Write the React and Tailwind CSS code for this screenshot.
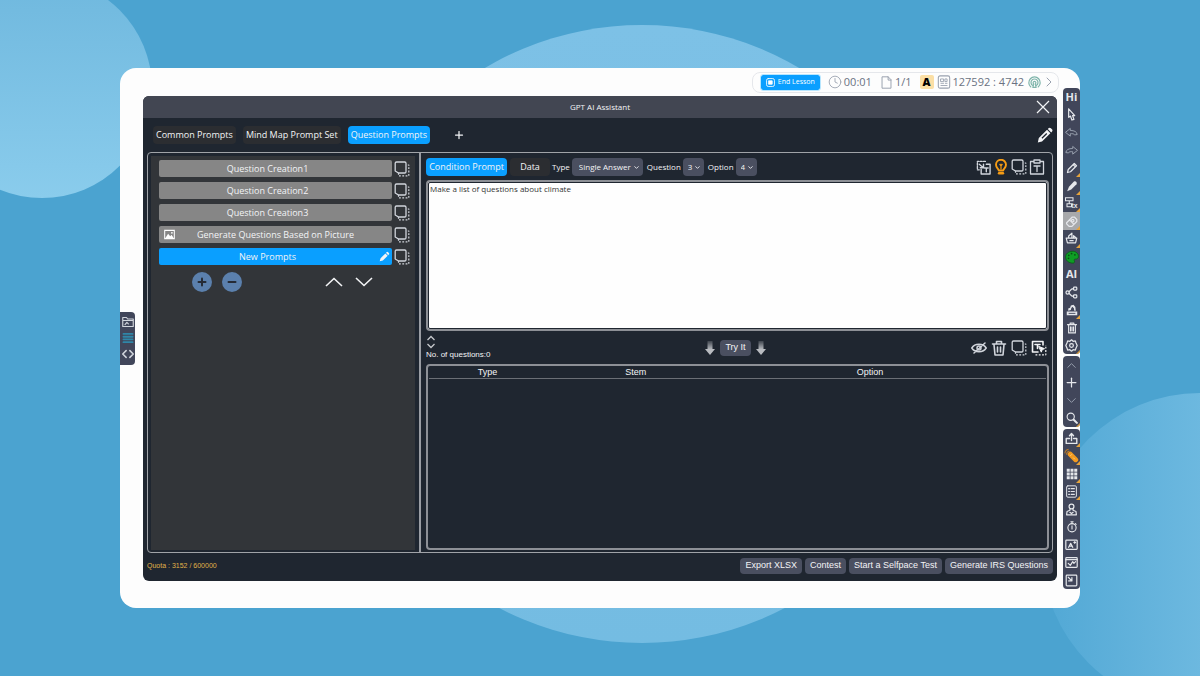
import { useState } from 'react';
import clsx from 'clsx';
import { ChevronDown, ChevronRight, ChevronUp, Clock, Plus, Minus } from 'lucide-react';

// Small stroke icon on a 16x16 grid
const Glyph = ({ children, className = 'size-3' }) => (
  <svg
    viewBox="0 0 16 16"
    className={className}
    fill="none"
    stroke="currentColor"
    strokeWidth="1.5"
    strokeLinecap="round"
    strokeLinejoin="round"
    aria-hidden="true"
  >
    {children}
  </svg>
);

const CopyIcon = ({ className = 'size-4' }) => (
  <Glyph className={className}>
    <path d="M2.500 1h8.200a1.300 1.300 0 0 1 1.300 1.300v8.400a1.300 1.300 0 0 1-1.300 1.300H4.500L1.200 10V2.300A1.300 1.300 0 0 1 2.500 1z" strokeWidth="1.300" />
    <path d="M4.500 12v2.800h10.300V4H12.500" strokeDasharray="1.800 1.500" strokeWidth="1.200" strokeLinecap="butt" />
  </Glyph>
);

const PencilIcon = ({ className }) => (
  <svg viewBox="0 0 16 16" className={className} fill="currentColor" aria-hidden="true">
    <path d="M11 1.800a1.600 1.600 0 0 1 2.300 0l1 1a1.600 1.600 0 0 1 0 2.300l-.9.9-3.300-3.300zM9.300 3.500l3.300 3.300-7 7L1 15l1.300-4.500z" />
  </svg>
);

const BigPencilIcon = ({ className }) => (
  <svg viewBox="0 0 16 16" className={className} fill="currentColor" aria-hidden="true">
    <path d="M11.500 1.300a1.700 1.700 0 0 1 2.400 0l1 1a1.700 1.700 0 0 1 0 2.400l-.7.7-3.400-3.400zM10 2.800l3.400 3.400-8.400 8.300L.8 15.500l1-4.400z" />
    <path d="M4.500 10.800l4.800-4.800 .9.9-4.800 4.800z" fill="#1f2630" />
  </svg>
);

const PointerIcon = () => (
  <Glyph className="size-[13px]">
    <path d="M4.500 1v10.500l2.300-1.500 1.700 4.800 2.500-.8-1.700-4.700h2.700z" />
  </Glyph>
);

const UndoIcon = () => (
  <Glyph className="size-[13px] text-gray-400">
    <path d="M1 7.500L6.500 3v2.500c5 0 8 1.500 8.500 5l-3 .5c-1-1.500-3-1.700-5.500-1.500V12z" strokeWidth="1.200" />
  </Glyph>
);

const RedoIcon = () => (
  <Glyph className="size-[13px] text-gray-400">
    <path d="M15 7.500L9.500 3v2.500c-5 0-8 1.500-8.500 5l3 .5c1-1.500 3-1.700 5.500-1.500V12z" strokeWidth="1.200" />
  </Glyph>
);

const PenIcon = () => (
  <Glyph>
    <path d="M2 14l1-4 8-8 3 3-8 8zM9.500 3.500l3 3" strokeWidth="1.700" />
  </Glyph>
);

const MarkerIcon = () => (
  <svg viewBox="0 0 16 16" className="size-3" fill="currentColor" aria-hidden="true">
    <path d="M10.500 2c2.300-1.500 5 1.200 3.500 3.500L7 12.500l-5.500 2.500L4 9z" />
  </svg>
);

const TextToolIcon = () => (
  <svg viewBox="0 0 18 16" className="h-3 w-[15px]" fill="none" stroke="currentColor" aria-hidden="true">
    <path d="M1 1h10v4H1zM6 5v4M3 9h6v4H3z" strokeWidth="1.400" />
    <text x="9" y="15" fontSize="9" fontWeight="700" fill="currentColor" stroke="none" fontFamily="Liberation Sans">tx</text>
  </svg>
);

const EraserIcon = () => (
  <Glyph className="size-[13px] text-gray-200">
    <path d="M2 9.500L9 2.500h2.500l3 3V8L8.500 14H5l-3-3zM5.500 6l5.500 5.500" />
    <circle cx="9.500" cy="7" r="1.500" />
  </Glyph>
);

const ShapesIcon = () => (
  <Glyph className="size-[13px]">
    <path d="M1.500 7.500h13l-1.500 6H3zM4.500 7V5l4-3.500V7M10.500 7V4.500l3 2.500" />
    <path d="M6 10.700h4" />
  </Glyph>
);

const PaletteIcon = () => (
  <svg viewBox="0 0 16 16" className="size-[14px]" aria-hidden="true">
    <path
      d="M8 1.500c4.500-.3 7.500 2.500 7.300 6 0 2.300-1.500 3-3.300 2.800-1.500 0-1.800 1-1.300 2 .6 1.500 0 2.700-1.700 2.700C4 15 .7 11.800.7 8S4 1.800 8 1.500z"
      fill="#0f9d25"
      stroke="#0b5f1a"
    />
    <g fill="#0a4f16">
      <circle cx="4" cy="9.500" r="1" />
      <circle cx="4.300" cy="6" r="1" />
      <circle cx="7.500" cy="4" r="1" />
      <circle cx="11.300" cy="5.500" r="1" />
    </g>
  </svg>
);

const NodesIcon = () => (
  <Glyph className="size-[13px]">
    <circle cx="3.200" cy="8" r="2" />
    <rect x="10.500" y="1.500" width="4" height="3.500" rx="1" />
    <rect x="10.500" y="11" width="4" height="3.500" rx="1" />
    <path d="M5 7c1.500-.5 1.500-3.700 5.500-3.700M5 9c1.500.5 1.500 3.700 5.500 3.700" />
  </Glyph>
);

const StampIcon = () => (
  <svg viewBox="0 0 16 16" className="size-3" fill="currentColor" aria-hidden="true">
    <path d="M1 10h14v5H1zM3 9V6l2.500-1 1-3L10 1l2.500 3L13 9h-2l-.5-3.500-2-2L7 5.500 6.500 8z" />
    <path d="M3.500 12.500h9" stroke="#41465a" strokeWidth="1.200" />
  </svg>
);

const BinIcon = () => (
  <Glyph>
    <path d="M2 3.500h12M5.500 3V1.500h5V3M3.500 4v10.500h9V4M6 6.500v5.500M8 6.500v5.500M10 6.500v5.500" />
  </Glyph>
);

const GearIcon = () => (
  <Glyph className="size-[13px]">
    <path d="M8 1l2 1.800 2.700-.4.900 2.600L15 8l-1.400 3-.9 2.600-2.700-.4L8 15l-2-1.800-2.700.4-.9-2.600L1 8l1.400-3 .9-2.600 2.700.4z" />
    <circle cx="8" cy="8" r="2.300" />
  </Glyph>
);

const ZoomIcon = () => (
  <Glyph>
    <circle cx="6.300" cy="6.300" r="4.800" />
    <path d="M10.300 10.300l4.200 4.200" strokeWidth="2.800" />
  </Glyph>
);

const UploadIcon = () => (
  <Glyph className="size-[13px]">
    <path d="M5.500 8h-4v6h13V8h-4M8 10.500V2M5.500 4.500L8 1.800l2.500 2.700" strokeWidth="1.700" />
  </Glyph>
);

const RemoteIcon = () => (
  <svg viewBox="0 0 18 18" className="size-[15px]" fill="none" aria-hidden="true">
    <path d="M7.500 7.500l6.500 6.500" stroke="#f39a1f" strokeWidth="6" strokeLinecap="round" />
    <path d="M7.500 9.500l2-2M11 11.500l2 2" stroke="#fbd18c" />
    <path d="M1 6.500C1.300 4 3 2 5.500 1.500M3 8c.2-2 1.500-3.700 3.500-4.300" stroke="#b97a2a" strokeWidth="1.300" />
  </svg>
);

const GridIcon = () => (
  <svg viewBox="0 0 16 16" className="size-3" fill="currentColor" aria-hidden="true">
    <path d="M1 1h4v4H1zM6 1h4v4H6zM11 1h4v4h-4zM1 6h4v4H1zM6 6h4v4H6zM11 6h4v4h-4zM1 11h4v4H1zM6 11h4v4H6zM11 11h4v4h-4z" />
  </svg>
);

const ListIcon = () => (
  <Glyph className="size-[13px]">
    <rect x="2" y="1" width="12" height="14" rx="1.500" strokeWidth="1.200" />
    <path d="M4.500 4.500h1M7.500 4.500h4M4.500 8h1M7.500 8h4M4.500 11.500h1M7.500 11.500h4" />
  </Glyph>
);

const PersonIcon = () => (
  <Glyph className="size-[13px]">
    <circle cx="8" cy="4.300" r="3" />
    <path d="M6.300 7L6 9l-3.500 1.500L2 14.500h12l-.5-4L10 9l-.3-2M6 11.500l2 1.500 2-1.500" />
  </Glyph>
);

const TimerIcon = () => (
  <Glyph>
    <circle cx="8" cy="9" r="5.500" />
    <path d="M6.500 1h3M8 1.500v2M8 6.500v4M12.500 3.500l1 1" />
  </Glyph>
);

const PictureTextIcon = () => (
  <Glyph className="size-[13px]">
    <rect x="1" y="2.500" width="14" height="11.500" rx="1" />
    <path d="M4.500 11.500l2.500-5 2.500 5M5.500 10h3M11 5.500h2M12 4.500v2" />
  </Glyph>
);

const ChartIcon = () => (
  <Glyph className="size-[13px]">
    <rect x="1" y="2" width="14" height="12" rx="1" />
    <path d="M1 4.500h14M4 9l2.500 2.500L9.500 7l1.500 2 2-2" />
  </Glyph>
);

const CornerIcon = () => (
  <Glyph className="size-[13px]">
    <rect x="1.500" y="1.500" width="13" height="13" rx="1" />
    <path d="M4 4l4.500 4.500M8.500 4.500v4h-4" />
  </Glyph>
);

const toolGroups = [
  {
    size: 'flex-[15]',
    tools: [
      { name: 'Hi', text: 'Hi' },
      { name: 'Select', icon: PointerIcon },
      { name: 'Undo', icon: UndoIcon },
      { name: 'Redo', icon: RedoIcon },
      { name: 'Pen', icon: PenIcon, more: true },
      { name: 'Marker', icon: MarkerIcon, more: true },
      { name: 'Text', icon: TextToolIcon, more: true },
      { name: 'Eraser', icon: EraserIcon, more: true, active: true },
      { name: 'Shapes', icon: ShapesIcon, more: true },
      { name: 'Palette', icon: PaletteIcon },
      { name: 'AI', text: 'AI' },
      { name: 'Mind map', icon: NodesIcon },
      { name: 'Stamp', icon: StampIcon, more: true },
      { name: 'Clear', icon: BinIcon },
      { name: 'Settings', icon: GearIcon, more: true },
    ],
  },
  {
    size: 'flex-[4]',
    tools: [
      { name: 'Previous page', icon: () => <ChevronUp className="size-[15px] text-gray-400" strokeWidth={1.5} /> },
      { name: 'Add page', icon: () => <Plus className="size-[15px]" strokeWidth={2} /> },
      { name: 'Next page', icon: () => <ChevronDown className="size-[15px] text-gray-400" strokeWidth={1.5} /> },
      { name: 'Zoom', icon: ZoomIcon, more: true },
    ],
  },
  {
    size: 'flex-[9]',
    tools: [
      { name: 'Share', icon: UploadIcon, more: true },
      { name: 'Remote', icon: RemoteIcon, more: true },
      { name: 'Apps', icon: GridIcon, more: true },
      { name: 'Questions', icon: ListIcon, more: true },
      { name: 'Pick a student', icon: PersonIcon },
      { name: 'Timer', icon: TimerIcon },
      { name: 'Picture text', icon: PictureTextIcon },
      { name: 'Chart', icon: ChartIcon },
      { name: 'Dock', icon: CornerIcon },
    ],
  },
];

const prompts = [
  { name: 'Question Creation1' },
  { name: 'Question Creation2' },
  { name: 'Question Creation3' },
  { name: 'Generate Questions Based on Picture', picture: true },
  { name: 'New Prompts', editable: true },
];

const tabs = ['Common Prompts', 'Mind Map Prompt Set', 'Question Prompts'];
const exportActions = ['Export XLSX', 'Contest', 'Start a Selfpace Test', 'Generate IRS Questions'];

const Tab = ({ label, active, onClick, className }) => (
  <button
    onClick={onClick}
    className={clsx('h-[18px] rounded', active ? 'bg-[#0a9fff]' : 'bg-[#2b2d31]', className)}
  >
    {label}
  </button>
);

const SelectField = ({ id, label, options, className }) => (
  <div className="flex items-center gap-[2px]">
    <label htmlFor={id}>{label}</label>
    <div className="relative">
      <select id={id} className={clsx('h-[18px] appearance-none rounded-sm bg-[#4a4f60] text-[8px]', className)}>
        {options.map((option) => (
          <option key={option}>{option}</option>
        ))}
      </select>
      <ChevronDown className="pointer-events-none absolute right-[3px] top-[6px] size-[7px]" strokeWidth={3} />
    </div>
  </div>
);

const IconButton = ({ label, children, className }) => (
  <button aria-label={label} className={clsx('flex items-center justify-center', className)}>
    {children}
  </button>
);

const StatusBar = () => (
  <div className="-mr-[2px] flex h-[21px] items-center rounded-lg border border-gray-200 pl-2 pr-px text-[11px] text-gray-500">
    <button className="mr-2 flex h-[15px] items-center gap-[3px] rounded-xs bg-[#0a9fff] px-[5px] text-[7px] text-white outline outline-sky-200">
      <Glyph className="size-[9px]">
        <rect x="1" y="1" width="14" height="14" rx="3" />
        <rect x="5" y="5" width="6" height="6" fill="currentColor" />
      </Glyph>
      End Lesson
    </button>
    <Clock className="mr-[2px] size-[14px] text-gray-400" strokeWidth={1.5} />
    <span className="mr-2">00:01</span>
    <Glyph className="mr-[2px] size-[13px] text-gray-400">
      <path d="M3 1h7l3.500 3.500V15H3zM10 1v4h3.500" strokeWidth="1.200" />
    </Glyph>
    <span className="mr-2">1/1</span>
    <span className="mr-[3px] flex size-[14px] items-center justify-center rounded-xs bg-[#fbdfa5] text-[11px] font-extrabold text-black">
      A
    </span>
    <Glyph className="mr-[2px] size-[14px] text-gray-400">
      <rect x="1.500" y="1" width="13" height="14" rx="2" strokeWidth="1.200" />
      <path d="M4.500 4.500h3v3h-3zM9.500 4.500h2v3h-2zM4.500 9.500h3M9.500 9.500h2M4.500 12h7" strokeWidth="1" />
    </Glyph>
    <span className="mr-1">127592 : 4742</span>
    <Glyph className="size-[13px] text-[#7fb5ab]">
      <path d="M3.500 13.500a7 7 0 1 1 9 0M5.500 11.500a4.300 4.300 0 1 1 5 0M7 9.800a1.700 1.700 0 1 1 2 0L10 14H6z" />
    </Glyph>
    <ChevronRight className="size-4 text-gray-400" strokeWidth={1.5} />
  </div>
);

const SideTabs = () => (
  <div className="flex h-[53px] w-[15px] flex-col items-center justify-center gap-1 self-center rounded-r-sm bg-[#41465a] text-gray-300">
    <IconButton label="Files">
      <Glyph className="size-3">
        <path d="M1 2h5l1.500 2H15v10H1zM1 6h14M4 11.500l2.500-3 2 2" />
      </Glyph>
    </IconButton>
    <IconButton label="Layers" className="text-[#2f86a8]">
      <Glyph className="size-3">
        <path d="M2 2.500h12M2 6.200h12M2 9.800h12M2 13.500h12" strokeWidth="2.600" />
      </Glyph>
    </IconButton>
    <IconButton label="Code">
      <Glyph className="size-3">
        <path d="M5.500 3.500L1 8l4.500 4.500M10.500 3.500L15 8l-4.500 4.500" strokeWidth="2" />
      </Glyph>
    </IconButton>
  </div>
);

const Toolbar = () => (
  <aside className="mb-[19px] mt-[20px] flex w-[17px] flex-col gap-[2px]">
    {toolGroups.map(({ size, tools }) => (
      <div key={size} className={clsx('flex min-h-0 flex-col overflow-hidden rounded-sm bg-[#41465a] text-gray-200', size)}>
        {tools.map(({ name, text, icon: Icon, more, active }) => (
          <button
            key={name}
            aria-label={name}
            className={clsx('relative flex min-h-0 flex-1 items-center justify-center', active && 'bg-[#a8a9ab]')}
          >
            {text ? <span className="text-[11px]/4 font-bold">{text}</span> : <Icon />}
            {more && (
              <svg viewBox="0 0 4 4" className="absolute bottom-0 right-0 size-[4px]" aria-hidden="true">
                <path d="M4 0v4H0z" fill="#e5a33c" />
              </svg>
            )}
          </button>
        ))}
      </div>
    ))}
  </aside>
);

const PromptList = ({ selected, onSelect }) => (
  <div className="w-[273px] shrink-0 border-r-2 border-[#9a9da3] pb-[2px] pl-[3px] pr-[4px] pt-[3px]">
    <div className="h-full bg-[#323539] pl-2 pr-[5px] pt-1">
      <ul className="flex flex-col gap-[5px]">
        {prompts.map(({ name, picture, editable }) => (
          <li key={name} className="flex items-center gap-[2px]">
            <button
              onClick={() => onSelect(name)}
              className={clsx(
                'relative h-[17px] min-w-0 flex-1 rounded-xs pr-4',
                selected === name ? 'bg-[#0a9fff]' : 'bg-[#868686]',
                picture && 'pl-4',
              )}
            >
              {picture && (
                <svg viewBox="0 0 16 16" className="absolute left-[5px] top-[3px] size-[11px]" aria-hidden="true">
                  <path d="M1 2h14v12H1z" fill="none" stroke="white" strokeWidth="1.500" />
                  <path d="M2 13l4-6 3 3.500 2-2 3 4.500z" fill="white" />
                  <circle cx="11.500" cy="5.500" r="1.300" fill="white" />
                </svg>
              )}
              {name}
              {editable && <PencilIcon className="absolute right-[2px] top-[3px] size-[11px]" />}
            </button>
            <IconButton label={`Copy ${name}`} className="h-[17px] text-gray-300">
              <CopyIcon />
            </IconButton>
          </li>
        ))}
      </ul>
      <div className="mt-[7px] flex items-center pl-[33px] pr-[31px]">
        <IconButton label="Add prompt" className="mr-[10px] size-5 rounded-full bg-[#5b80ad] text-[#252b36]">
          <Plus className="size-3" strokeWidth={4} />
        </IconButton>
        <IconButton label="Remove prompt" className="mr-auto size-5 rounded-full bg-[#5b80ad] text-[#252b36]">
          <Minus className="size-3" strokeWidth={4} />
        </IconButton>
        <IconButton label="Move up" className="w-[30px]">
          <svg viewBox="0 0 18 10" className="h-[10px] w-[18px]" fill="none" stroke="currentColor" strokeWidth="1.600">
            <path d="M1 9l8-7.500L17 9" />
          </svg>
        </IconButton>
        <IconButton label="Move down" className="w-[30px]">
          <svg viewBox="0 0 18 10" className="h-[10px] w-[18px]" fill="none" stroke="currentColor" strokeWidth="1.600">
            <path d="M1 1l8 7.500L17 1" />
          </svg>
        </IconButton>
      </div>
    </div>
  </div>
);

const DownArrow = () => (
  <svg viewBox="0 0 12 16" className="h-4 w-3" aria-hidden="true">
    <defs>
      <linearGradient id="arrow-fade" x1="0" y1="0" x2="0" y2="1">
        <stop offset="0" stopColor="#b8bbc0" stopOpacity="0.2" />
        <stop offset="0.6" stopColor="#b8bbc0" />
      </linearGradient>
    </defs>
    <path d="M3.500 1h5v8H11l-5 6-5-6h2.500z" fill="url(#arrow-fade)" />
  </svg>
);

const ConditionBar = () => (
  <div className="flex items-center">
    <Tab label="Condition Prompt" active className="w-[81px]" />
    <Tab label="Data" className="ml-[3px] mr-[2px] w-[40px]" />
    <div className="flex gap-1 text-[8px]">
      <SelectField id="type" label="Type" options={['Single Answer', 'Multiple Answers', 'True or False']} className="w-[71px] pl-[7px]" />
      <SelectField id="question" label="Question" options={[3, 4, 5]} className="w-[21px] pl-[5px]" />
      <SelectField id="option" label="Option" options={[4, 5, 6]} className="w-[21px] pl-[5px]" />
    </div>
    <div className="ml-auto mr-1 flex items-center gap-[2px] text-gray-300">
      <IconButton label="Insert template">
        <Glyph className="size-[15px]">
          <path d="M10 1.500H1.500v9h2" strokeDasharray="2 1.500" />
          <path d="M11 4.500h4V15H5.500V10M9 8.500h4M11 8.500V12.500M3.500 4.500l4 3.500M8 4.500V8.300H4.500" />
        </Glyph>
      </IconButton>
      <IconButton label="Hint" className="text-[#f59b14]">
        <Glyph className="size-4">
          <path d="M5.800 11.500C5.500 9.800 3 8.800 3 5.800a5 5 0 0 1 10 0c0 3-2.500 4-2.800 5.700z" strokeWidth="1.900" />
          <path d="M6 14.300h4" strokeWidth="2.400" />
          <path d="M8 5v5M6.800 5.500L8 7l1.200-1.500" strokeWidth="1.200" />
        </Glyph>
      </IconButton>
      <IconButton label="Copy">
        <CopyIcon />
      </IconButton>
      <IconButton label="Paste">
        <Glyph className="size-4">
          <path d="M5 2.500H1.500V15h13V2.500H11M5 1h6v3H5zM5 7h6M8 7v5.500" strokeWidth="1.300" />
        </Glyph>
      </IconButton>
    </div>
  </div>
);

const ActionBar = () => (
  <div className="grid h-[33px] grid-cols-3 items-center">
    <div className="flex flex-col items-start font-['Liberation_Sans',sans-serif]">
      <IconButton label="Resize">
        <svg viewBox="0 0 10 14" className="h-[14px] w-[10px]" fill="none" stroke="#c5c8cc" strokeWidth="1.300">
          <path d="M1.500 5L5 1.500 8.500 5M1.500 9L5 12.500 8.500 9" />
        </svg>
      </IconButton>
      <span className="text-[8px]/3">No. of questions:0</span>
    </div>
    <div className="flex items-center justify-center gap-1 pr-1">
      <DownArrow />
      <button className="h-4 rounded-sm bg-[#4a4f60] px-[5px] font-['Liberation_Sans',sans-serif]">Try It</button>
      <DownArrow />
    </div>
    <div className="mr-[2px] flex items-center justify-end gap-1 text-gray-300">
      <IconButton label="Hide answers">
        <Glyph className="size-4">
          <path d="M.8 8c3-5 11.400-5 14.400 0-3 5-11.400 5-14.400 0zM3 13L14 3" />
          <circle cx="8" cy="8" r="2" />
        </Glyph>
      </IconButton>
      <IconButton label="Delete">
        <Glyph className="size-4">
          <path d="M1.500 4h13M5.500 3.500V1.500h5v2M3 4.500L4 15h8l1-10.500M6.500 7v5M9.500 7v5" strokeWidth="1.600" />
        </Glyph>
      </IconButton>
      <IconButton label="Copy questions">
        <CopyIcon />
      </IconButton>
      <IconButton label="Copy as text" className="text-gray-100">
        <Glyph className="size-4">
          <path d="M12 5V1.500H1.500V12H7M4 4.500h5M6.500 4.500v4" strokeWidth="1.600" />
          <path d="M8 6.500l5.500 2.200-2.200.9-.9 2.200z" fill="currentColor" strokeWidth="1" />
          <path d="M4.500 14.800h10.300V5" strokeDasharray="1.800 1.500" strokeWidth="1.200" strokeLinecap="butt" />
        </Glyph>
      </IconButton>
    </div>
  </div>
);

const QuestionTable = () => (
  <div className="flex-1 rounded border-2 border-[#8d9096] px-px font-['Liberation_Sans',sans-serif]">
    <table className="w-full table-fixed text-[9px]/3">
      <thead>
        <tr className="border-b border-[#6b6f76]">
          <th className="w-[19%] font-normal">Type</th>
          <th className="w-[29%] font-normal">Stem</th>
          <th className="w-[47%] font-normal">Option</th>
          <td className="w-[5%]" />
        </tr>
      </thead>
      <tbody />
    </table>
  </div>
);

const AssistantWindow = () => {
  const [tab, setTab] = useState('Question Prompts');
  const [selected, setSelected] = useState('New Prompts');

  return (
    <section className="flex flex-1 flex-col overflow-hidden rounded-md bg-[#1f2630] text-[9px] text-gray-100">
      <header className="grid h-[22px] grid-cols-3 items-center bg-[#424652]">
        <h1 className="col-start-2 text-center text-[8px]">GPT AI Assistant</h1>
        <IconButton label="Close" className="mr-[7px] justify-self-end">
          <svg viewBox="0 0 14 14" className="size-[14px]" stroke="currentColor" strokeWidth="1.200">
            <path d="M1 1l12 12M13 1L1 13" />
          </svg>
        </IconButton>
      </header>

      <nav className="flex h-[34px] items-center gap-[7px] pl-[10px] pr-1">
        {tabs.map((name) => (
          <Tab key={name} label={name} active={tab === name} onClick={() => setTab(name)} className="px-[3px]" />
        ))}
        <IconButton label="Add tab" className="ml-4">
          <Plus className="size-3" strokeWidth={2.5} />
        </IconButton>
        <IconButton label="Edit prompts" className="ml-auto">
          <BigPencilIcon className="size-4" />
        </IconButton>
      </nav>

      <div className="mx-1 flex min-h-0 flex-1 rounded border border-[#a0a3a8]">
        <PromptList selected={selected} onSelect={setSelected} />
        <div className="flex min-w-0 flex-1 flex-col pb-[2px] pl-[5px] pr-[3px] pt-[5px]">
          <ConditionBar />
          <textarea
            aria-label="Prompt"
            defaultValue="Make a list of questions about climate"
            className="mt-1 h-[151px] resize-none rounded border-2 border-[#8d9096] bg-[#fefefe] px-[2px] text-[8px]/[14px] text-[#333] outline-1 -outline-offset-3 outline-[#1f2630]"
          />
          <ActionBar />
          <QuestionTable />
        </div>
      </div>

      <footer className="flex h-[28px] items-center justify-end gap-[3px] px-1 pb-[2px] font-['Liberation_Sans',sans-serif]">
        <span className="mr-auto text-[7px] text-[#e0b34a]">Quota : 3152 / 600000</span>
        {exportActions.map((name) => (
          <button key={name} className="h-4 rounded-sm bg-[#4a4f60] px-[5px]">
            {name}
          </button>
        ))}
      </footer>
    </section>
  );
};

export default function App() {
  return (
    <div className="relative flex min-h-screen overflow-hidden bg-[#4ba3d0] px-[10%] py-[68px] font-['Open_Sans','Noto_Sans',sans-serif]">
      {/* Backdrop circles */}
      <div className="absolute -left-[68px] -top-[22px] size-[220px] rounded-full bg-linear-to-b from-[#6fb8de] to-[#8accec]" />
      <div className="absolute left-[53.500%] top-[25px] size-[618px] -translate-x-1/2 rounded-full bg-linear-to-b from-[#7dc1e6] to-[#74bce2]" />
      <div className="absolute -right-[158px] top-[393px] size-[316px] rounded-full bg-linear-to-r from-[#51a8d5] to-[#86c9ea]" />

      <main className="relative flex flex-1 overflow-hidden rounded-2xl bg-[#fdfdfd]">
        <SideTabs />
        <div className="ml-2 mr-[6px] flex min-w-0 flex-1 flex-col pb-[27px]">
          <div className="flex h-7 items-center justify-end">
            <StatusBar />
          </div>
          <AssistantWindow />
        </div>
        <Toolbar />
      </main>
    </div>
  );
}
